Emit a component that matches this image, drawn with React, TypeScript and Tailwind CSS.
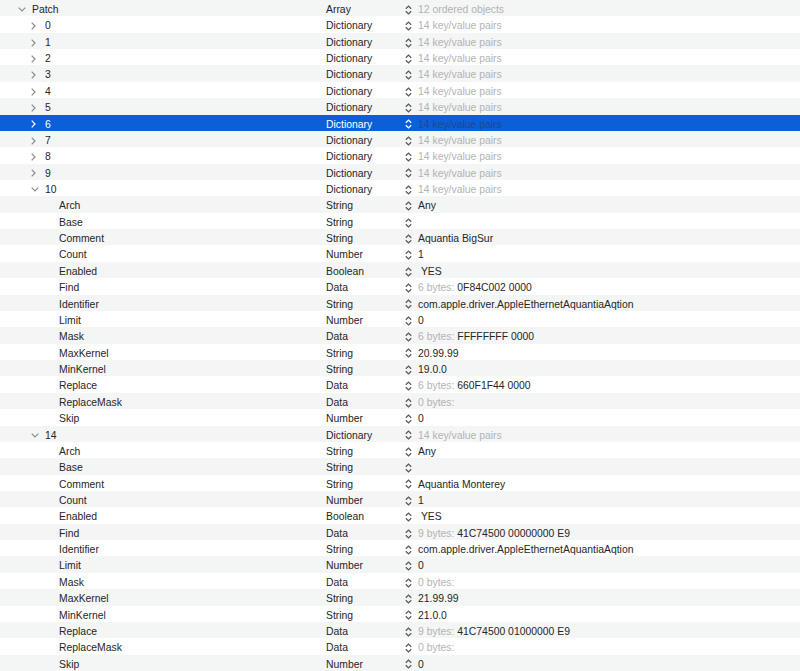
import React from "react";

type Row = {
  key: string;
  level: 0 | 1 | 2;
  open?: boolean;
  type: string;
  value?: string;
  hint?: string;
  selected?: boolean;
};

const children = (v: {
  comment: string;
  find: [string, string];
  mask: [string, string];
  max: string;
  min: string;
  replace: [string, string];
}): Row[] => [
  { key: "Arch", level: 2, type: "String", value: "Any" },
  { key: "Base", level: 2, type: "String", value: "" },
  { key: "Comment", level: 2, type: "String", value: v.comment },
  { key: "Count", level: 2, type: "Number", value: "1" },
  { key: "Enabled", level: 2, type: "Boolean", value: "\u00a0YES" },
  { key: "Find", level: 2, type: "Data", hint: v.find[0], value: v.find[1] },
  { key: "Identifier", level: 2, type: "String", value: "com.apple.driver.AppleEthernetAquantiaAqtion" },
  { key: "Limit", level: 2, type: "Number", value: "0" },
  { key: "Mask", level: 2, type: "Data", hint: v.mask[0], value: v.mask[1] },
  { key: "MaxKernel", level: 2, type: "String", value: v.max },
  { key: "MinKernel", level: 2, type: "String", value: v.min },
  { key: "Replace", level: 2, type: "Data", hint: v.replace[0], value: v.replace[1] },
  { key: "ReplaceMask", level: 2, type: "Data", hint: "0 bytes:", value: "" },
  { key: "Skip", level: 2, type: "Number", value: "0" },
];

const rows: Row[] = [
  { key: "Patch", level: 0, open: true, type: "Array", hint: "12 ordered objects" },
  ...["0", "1", "2", "3", "4", "5", "6", "7", "8", "9"].map((k) => ({
    key: k,
    level: 1 as const,
    type: "Dictionary",
    hint: "14 key/value pairs",
    selected: k === "6",
  })),
  { key: "10", level: 1, open: true, type: "Dictionary", hint: "14 key/value pairs" },
  ...children({
    comment: "Aquantia BigSur",
    find: ["6 bytes:", "0F84C002 0000"],
    mask: ["6 bytes:", "FFFFFFFF 0000"],
    max: "20.99.99",
    min: "19.0.0",
    replace: ["6 bytes:", "660F1F44 0000"],
  }),
  { key: "14", level: 1, open: true, type: "Dictionary", hint: "14 key/value pairs" },
  ...children({
    comment: "Aquantia Monterey",
    find: ["9 bytes:", "41C74500 00000000 E9"],
    mask: ["0 bytes:", ""],
    max: "21.99.99",
    min: "21.0.0",
    replace: ["9 bytes:", "41C74500 01000000 E9"],
  }),
];

function Chevron({ open, selected }: { open?: boolean; selected?: boolean }) {
  const color = selected ? "#ffffff" : "#8c8c8c";
  return (
    <span className="w-[14px] flex items-center shrink-0">
      {open ? (
        <svg width="8" height="5" viewBox="0 0 8 5">
          <path d="M0.7 0.7 L4 4 L7.3 0.7" fill="none" stroke={color} strokeWidth="1.2" />
        </svg>
      ) : (
        <svg width="5" height="8" viewBox="0 0 5 8">
          <path d="M0.7 0.7 L4 4 L0.7 7.3" fill="none" stroke={color} strokeWidth="1.2" />
        </svg>
      )}
    </span>
  );
}

function Stepper({ selected }: { selected?: boolean }) {
  const color = selected ? "#ffffff" : "#5a5a5a";
  return (
    <svg width="7" height="10" viewBox="0 0 7 10" className="shrink-0">
      <path d="M0.8 3.8 L3.5 1.1 L6.2 3.8" fill="none" stroke={color} strokeWidth="1.3" />
      <path d="M0.8 6.2 L3.5 8.9 L6.2 6.2" fill="none" stroke={color} strokeWidth="1.3" />
    </svg>
  );
}

export default function App() {
  return (
    <div
      className="w-[800px] h-[671px] bg-white grid grid-rows-[repeat(41,minmax(0,1fr))] overflow-hidden text-[10.4px] text-[#262626]"
      style={{ fontFamily: '"Liberation Sans", Arial, sans-serif' }}
    >
      {rows.map((r, i) => {
        const bg = r.selected ? "bg-[#0b5fd7]" : i % 2 === 0 ? "bg-[#f4f5f5]" : "bg-white";
        const pad = r.level === 0 ? "pl-[18px]" : r.level === 1 ? "pl-[31px]" : "pl-[59px]";
        return (
          <div key={i} className={`grid grid-cols-[326px_79px_1fr] items-center pt-[2px] ${bg}`}>
            <div className={`flex items-center ${pad} ${r.selected ? "text-white" : ""}`}>
              {r.level < 2 && <Chevron open={r.open} selected={r.selected} />}
              <span>{r.key}</span>
            </div>
            <div className={r.selected ? "text-white" : ""}>{r.type}</div>
            <div className="flex items-center gap-[6px] whitespace-pre">
              <Stepper selected={r.selected} />
              <span>
                {r.hint && (
                  <span className={r.selected ? "text-[#1d4a8c]" : "text-[#b3b3b3]"}>{r.hint}</span>
                )}
                {r.hint && r.value ? " " : ""}
                {r.value}
              </span>
            </div>
          </div>
        );
      })}
    </div>
  );
}
